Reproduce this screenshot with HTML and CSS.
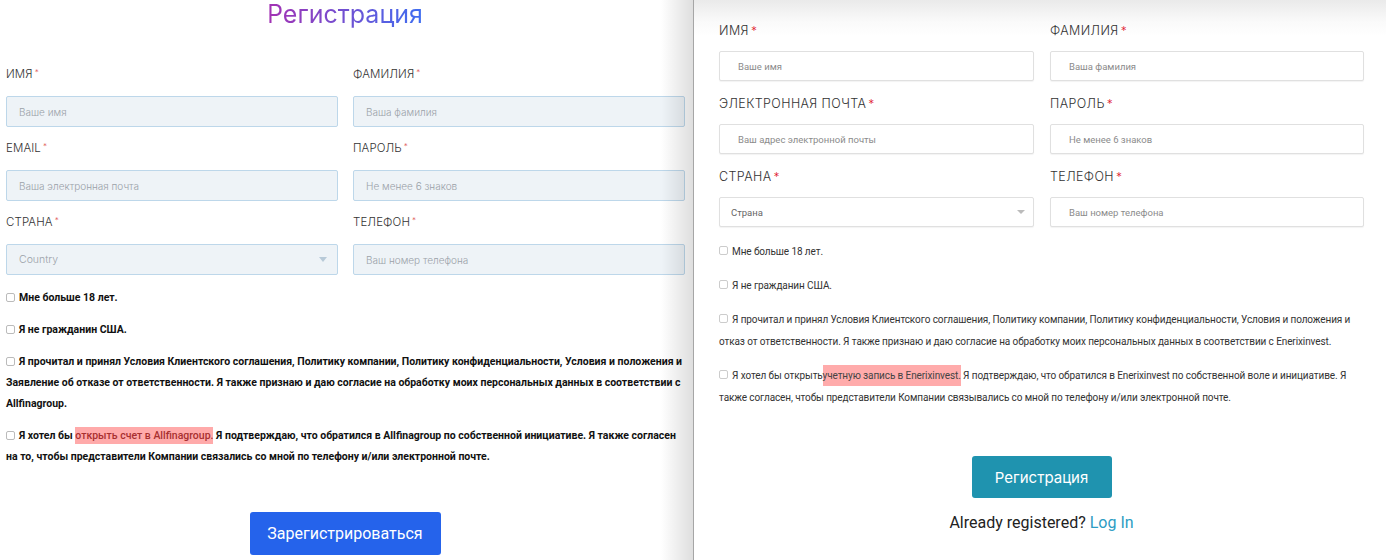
FILE: index.html
```html
<!DOCTYPE html>
<html lang="ru">
<head>
<meta charset="utf-8">
<title>Регистрация</title>
<link rel="stylesheet" href="styles.css">
</head>
<body>
<div class="page">
  <section class="left">
    <h1 class="title">Регистрация</h1>
    <div class="grid">
      <div class="field"><label class="lbl">ИМЯ<span class="req">*</span></label><div class="inp">Ваше имя</div></div>
      <div class="field"><label class="lbl">ФАМИЛИЯ<span class="req">*</span></label><div class="inp">Ваша фамилия</div></div>
      <div class="field"><label class="lbl">EMAIL<span class="req">*</span></label><div class="inp">Ваша электронная почта</div></div>
      <div class="field"><label class="lbl">ПАРОЛЬ<span class="req">*</span></label><div class="inp">Не менее 6 знаков</div></div>
      <div class="field"><label class="lbl">СТРАНА<span class="req">*</span></label><div class="inp sel">Country<span class="arrow"></span></div></div>
      <div class="field"><label class="lbl">ТЕЛЕФОН<span class="req">*</span></label><div class="inp">Ваш номер телефона</div></div>
    </div>
    <div class="checks">
      <p class="chk"><span class="box"></span>Мне больше 18 лет.</p>
      <p class="chk"><span class="box"></span>Я не гражданин США.</p>
      <p class="chk"><span class="box"></span>Я прочитал и принял Условия Клиентского соглашения, Политику компании, Политику конфиденциальности, Условия и положения и Заявление об отказе от ответственности. Я также признаю и даю согласие на обработку моих персональных данных в соответствии с Allfinagroup.</p>
      <p class="chk"><span class="box"></span>Я хотел бы <mark class="hl">открыть счет в Allfinagroup.</mark> Я подтверждаю, что обратился в Allfinagroup по собственной инициативе. Я также согласен на то, чтобы представители Компании связались со мной по телефону и/или электронной почте.</p>
    </div>
    <div class="actions"><button class="btn-blue">Зарегистрироваться</button></div>
  </section>
  <section class="right">
    <div class="grid2">
      <div class="field2"><label class="lbl2">ИМЯ<span class="req2">*</span></label><div class="inp2">Ваше имя</div></div>
      <div class="field2"><label class="lbl2">ФАМИЛИЯ<span class="req2">*</span></label><div class="inp2">Ваша фамилия</div></div>
      <div class="field2"><label class="lbl2">ЭЛЕКТРОННАЯ ПОЧТА<span class="req2">*</span></label><div class="inp2">Ваш адрес электронной почты</div></div>
      <div class="field2"><label class="lbl2">ПАРОЛЬ<span class="req2">*</span></label><div class="inp2">Не менее 6 знаков</div></div>
      <div class="field2"><label class="lbl2">СТРАНА<span class="req2">*</span></label><div class="inp2 sel2">Страна<span class="arrow2"></span></div></div>
      <div class="field2"><label class="lbl2">ТЕЛЕФОН<span class="req2">*</span></label><div class="inp2">Ваш номер телефона</div></div>
    </div>
    <div class="checks2">
      <p class="chk2"><span class="box2"></span>Мне больше 18 лет.</p>
      <p class="chk2"><span class="box2"></span>Я не гражданин США.</p>
      <p class="chk2"><span class="box2"></span>Я прочитал и принял Условия Клиентского соглашения, Политику компании, Политику конфиденциальности, Условия и положения и отказ от ответственности. Я также признаю и даю согласие на обработку моих персональных данных в соответствии с Enerixinvest.</p>
      <p class="chk2"><span class="box2"></span>Я хотел бы открыть<mark class="hl2">учетную запись в Enerixinvest.</mark> Я подтверждаю, что обратился в Enerixinvest по собственной воле и инициативе. Я также согласен, чтобы представители Компании связывались со мной по телефону и/или электронной почте.</p>
    </div>
    <div class="actions2">
      <button class="btn-teal">Регистрация</button>
      <p class="login">Already registered? <a class="login-link">Log In</a></p>
    </div>
  </section>
</div>
</body>
</html>
```
FILE: styles.css
```css
* { box-sizing: border-box; }
html, body { margin: 0; padding: 0; }
body { width: 1386px; height: 560px; overflow: hidden; background: #fff; font-family: Roboto, "Noto Sans", sans-serif; }
.page { display: flex; height: 560px; }

/* LEFT */
.left { position: relative; width: 694px; flex: none; padding: 0 9px 0 6px; border-right: 1px solid #a6a6a6; background: #fff; }
.left::after { content: ""; position: absolute; top: 0; right: 0; bottom: 0; width: 32px; background: linear-gradient(to right, rgba(0,0,0,0), rgba(0,0,0,0.13)); pointer-events: none; }
.title { margin: 0; height: 66px; text-align: center; font-family: Inter, "Open Sans", sans-serif; font-weight: 400; font-size: 25px; line-height: 28px; }
.title { background: linear-gradient(to right, transparent 0, transparent 262px, #a233b4 264px, #3c6ff2 420px, transparent 422px); -webkit-background-clip: text; background-clip: text; color: transparent; }
.grid { display: grid; grid-template-columns: 332px 332px; column-gap: 15px; row-gap: 13px; }
.field { display: flex; flex-direction: column; }
.lbl { font-family: Inter, "Open Sans", sans-serif; font-weight: 300; font-size: 11.5px; line-height: 16px; color: #333; margin-bottom: 14px; letter-spacing: 0.1px; }
.req { color: #e05a5a; font-size: 8px; vertical-align: top; margin-left: 2px; position: relative; top: -2px; }
.inp { height: 31px; background: #eef3f7; border: 1px solid #bdd7ea; border-radius: 2px; padding: 0 12px; display: flex; align-items: center; font-family: Inter, sans-serif; font-weight: 300; font-size: 10px; color: #9aa1a8; }
.sel { justify-content: space-between; font-size: 10.5px; }
.arrow { width: 0; height: 0; border-left: 4px solid transparent; border-right: 4px solid transparent; border-top: 5px solid #b8cad8; margin-right: -2px; }

.checks { margin-top: 12px; }
.chk { margin: 0 0 11px; font-family: Roboto, sans-serif; font-weight: 700; font-size: 10.5px; line-height: 21px; color: #111; letter-spacing: 0; }
.box { display: inline-block; width: 9px; height: 9px; border: 1px solid #bbb; border-radius: 2px; vertical-align: -1px; margin-right: 4px; background: #fff; }
.hl { background: #ffaaaa; color: #a83030; font-weight: 500; padding: 2px 0; }
.actions { display: flex; justify-content: center; margin-top: 45px; }
.btn-blue { width: 191px; height: 43px; border: 0; border-radius: 3px; background: #2563eb; color: #fff; font-family: Roboto, sans-serif; font-size: 16px; }

/* RIGHT */
.right { flex: 1; padding: 0 22px 0 25px; background: linear-gradient(#eaeaea 0, #fafafa 22px, #fff 36px); }
.grid2 { display: grid; grid-template-columns: 315px 314px; column-gap: 16px; row-gap: 15px; padding-top: 23px; }
.field2 { display: flex; flex-direction: column; }
.lbl2 { font-family: Inter, "Open Sans", sans-serif; font-weight: 300; font-size: 12.5px; line-height: 16px; color: #333; margin-bottom: 12px; letter-spacing: 0.4px; }
.req2 { color: #e0182d; font-size: 12px; margin-left: 2px; }
.inp2 { height: 30px; background: #fff; border: 1px solid #e0e0e0; border-radius: 2px; box-shadow: 0 1px 1px rgba(0,0,0,0.05); padding: 0 18px; display: flex; align-items: center; font-family: Roboto, sans-serif; font-size: 9.5px; color: #8b8b8b; }
.sel2 { padding-left: 11px; padding-right: 8px; justify-content: space-between; color: #666; }
.arrow2 { width: 0; height: 0; border-left: 4px solid transparent; border-right: 4px solid transparent; border-top: 4px solid #bbb; }
.checks2 { margin-top: 14px; }
.chk2 { margin: 0 0 12px; font-family: Roboto, sans-serif; font-size: 10px; line-height: 22px; color: #333; letter-spacing: -0.1px; }
.box2 { display: inline-block; width: 9px; height: 9px; border: 1px solid #ccc; border-radius: 2px; vertical-align: 0; margin-right: 4px; background: #fff; }
.hl2 { background: #ffabab; color: #444; padding: 5px 0; }
.actions2 { display: flex; flex-direction: column; align-items: center; margin-top: 47px; }
.btn-teal { width: 140px; height: 42px; border: 0; border-radius: 3px; background: #1f93af; color: #fff; font-family: Inter, "Open Sans", sans-serif; font-size: 15px; }
.login { margin: 13px 0 0; font-family: Roboto, sans-serif; font-size: 16px; line-height: 24px; color: #222; }
.login-link { color: #2c9cc3; }
```
